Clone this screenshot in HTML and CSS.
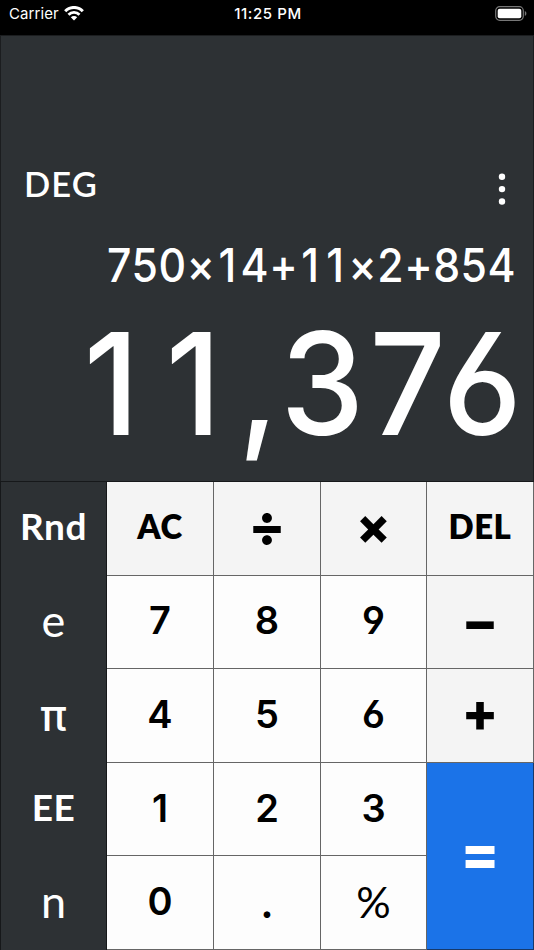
FILE: index.html
```html
<!DOCTYPE html>
<html lang="en">
<head>
    <meta charset="UTF-8">
    <meta name="viewport" content="width=device-width, initial-scale=1.0">
    <title>Calculator</title>
    <link rel="stylesheet" href="styles.css">
</head>
<body>
    <div class="status-bar">
        <div class="carrier">
            <span>Carrier</span>
            <svg class="wifi" viewBox="0 0 20 15" width="20" height="15">
                <path d="M1.2 5.2a12.2 12.2 0 0 1 17.6 0" fill="none" stroke="#fff" stroke-width="3"/>
                <path d="M4.5 8.7a7.6 7.6 0 0 1 11 0" fill="none" stroke="#fff" stroke-width="2.8"/>
                <path d="M10 14.6l-3.2-3.3a4.5 4.5 0 0 1 6.4 0z" fill="#fff"/>
            </svg>
        </div>
        <div class="time">11:25 PM</div>
        <svg class="battery" viewBox="0 0 32 15" width="32" height="15">
            <rect x="0.7" y="0.7" width="27.6" height="13.6" rx="4" fill="none" stroke="#777" stroke-width="1.2"/>
            <rect x="2.7" y="2.7" width="23.6" height="9.6" rx="2" fill="#fff"/>
            <path d="M29.8 5v5c1-.4 1.6-1.3 1.6-2.5s-.6-2.1-1.6-2.5z" fill="#777"/>
        </svg>
    </div>

    <div class="display">
        <div class="display-top">
            <span class="mode">DEG</span>
            <svg class="menu" viewBox="0 0 8 32" width="8" height="32">
                <circle cx="4" cy="3.8" r="3.2" fill="#fff"/>
                <circle cx="4" cy="16.1" r="3.2" fill="#fff"/>
                <circle cx="4" cy="28.5" r="3.2" fill="#fff"/>
            </svg>
        </div>
        <div class="expression">750×<span class="one">1</span>4+<span class="one">1</span><span class="one">1</span>×2+854</div>
        <div class="result"><span class="one">1</span><span class="one">1</span>,376</div>
    </div>

    <div class="keypad">
        <button class="key side word">Rnd</button>
        <button class="key action">AC</button>
        <button class="key action op">÷</button>
        <button class="key action op times">×</button>
        <button class="key action">DEL</button>

        <button class="key side">e</button>
        <button class="key">7</button>
        <button class="key">8</button>
        <button class="key">9</button>
        <button class="key action op minus">−</button>

        <button class="key side pi">π</button>
        <button class="key">4</button>
        <button class="key">5</button>
        <button class="key">6</button>
        <button class="key action op">+</button>

        <button class="key side word">EE</button>
        <button class="key">1</button>
        <button class="key">2</button>
        <button class="key">3</button>
        <button class="key op equals">=</button>

        <button class="key side">n</button>
        <button class="key">0</button>
        <button class="key dot">.</button>
        <button class="key percent">%</button>
    </div>
</body>
</html>
```
FILE: styles.css
```css
* {
    box-sizing: border-box;
}
body {
    font-family: Lato, sans-serif;
    margin: 0;
    width: 534px;
    height: 950px;
    background-color: #2d3134;
    color: #fff;
    display: flex;
    flex-direction: column;
    overflow: hidden;
}
.status-bar {
    height: 35px;
    padding: 0 7px 8px 9px;
    background: #000;
    font-family: Inter, sans-serif;
    font-size: 15px;
    display: grid;
    grid-template-columns: 1fr auto 1fr;
    align-items: center;
}
.carrier {
    display: flex;
    align-items: center;
    gap: 5px;
    letter-spacing: 0.1px;
}
.time {
    font-weight: 500;
    letter-spacing: 0.6px;
}
.battery {
    justify-self: end;
}
.display {
    height: 446px;
    padding: 129px 17px 0 23px;
    border: 1px solid #1b1d1f;
    border-bottom: none;
}
.display-top {
    display: flex;
    justify-content: space-between;
    align-items: center;
    height: 40px;
}
.mode {
    margin-top: -4px;
    font-size: 34.5px;
    font-weight: 600;
    letter-spacing: 1.1px;
}
.menu {
    margin: 8px 10px 0 0;
}
.expression {
    margin-top: 32px;
    font-family: Inter, sans-serif;
    font-size: 46px;
    font-weight: 450;
    line-height: 56px;
    font-feature-settings: "cv03", "cv04";
    letter-spacing: 0.5px;
    text-align: right;
    white-space: nowrap;
    transform: scaleX(0.93);
    transform-origin: right;
}
.result {
    margin: 10px -11px 0 0;
    font-family: Inter, sans-serif;
    font-size: 142px;
    font-weight: 500;
    line-height: 160px;
    font-feature-settings: "cv03", "cv04";
    letter-spacing: 5.5px;
    text-align: right;
    white-space: nowrap;
    transform: scaleX(0.94);
    transform-origin: right;
}
.one {
    margin: 0 0.09em 0 0.07em;
}
.keypad {
    height: 469px;
    border-top: 1px solid #16181a;
    border-left: 1px solid #16181a;
    display: grid;
    grid-template-columns: 106px 107px 107px 106px 107px;
    grid-template-rows: repeat(5, 93.6px);
}
.key {
    margin: 0;
    padding: 0 0 3px;
    border: none;
    border-right: 1px solid #666;
    border-bottom: 1px solid #666;
    background: #fdfdfd;
    color: #000;
    font-family: Inter, sans-serif;
    font-feature-settings: "cv03", "cv04";
    font-size: 38px;
    font-weight: 600;
    line-height: 1;
}
.action {
    background: #f4f4f4;
    font-family: Lato, sans-serif;
    font-size: 33px;
    font-weight: 800;
    letter-spacing: 0.5px;
}
.side {
    padding-bottom: 3px;
    background: #2d3134;
    border-right-color: #16181a;
    border-bottom: none;
    color: #fff;
    font-family: Lato, sans-serif;
    font-size: 45px;
    font-weight: 400;
}
.word {
    padding-bottom: 6px;
    font-size: 37px;
    font-weight: 700;
    letter-spacing: 0.5px;
}
.pi {
    padding-bottom: 0;
    font-family: Inter, sans-serif;
    font-size: 43px;
    font-weight: 500;
}
.op {
    padding-bottom: 5px;
    font-family: Inter, sans-serif;
    font-size: 54px;
    font-weight: 800;
    letter-spacing: 0;
}
.times {
    font-size: 50px;
}
.minus {
    padding-bottom: 0;
}
.equals {
    grid-row: span 2;
    background: #1b73e8;
    border-color: #16396b;
    color: #fff;
    font-size: 57px;
}
.dot {
    font-family: Lato, sans-serif;
    font-size: 44px;
    font-weight: 700;
}
.percent {
    font-family: Lato, sans-serif;
    font-size: 43px;
    font-weight: 400;
}
```
